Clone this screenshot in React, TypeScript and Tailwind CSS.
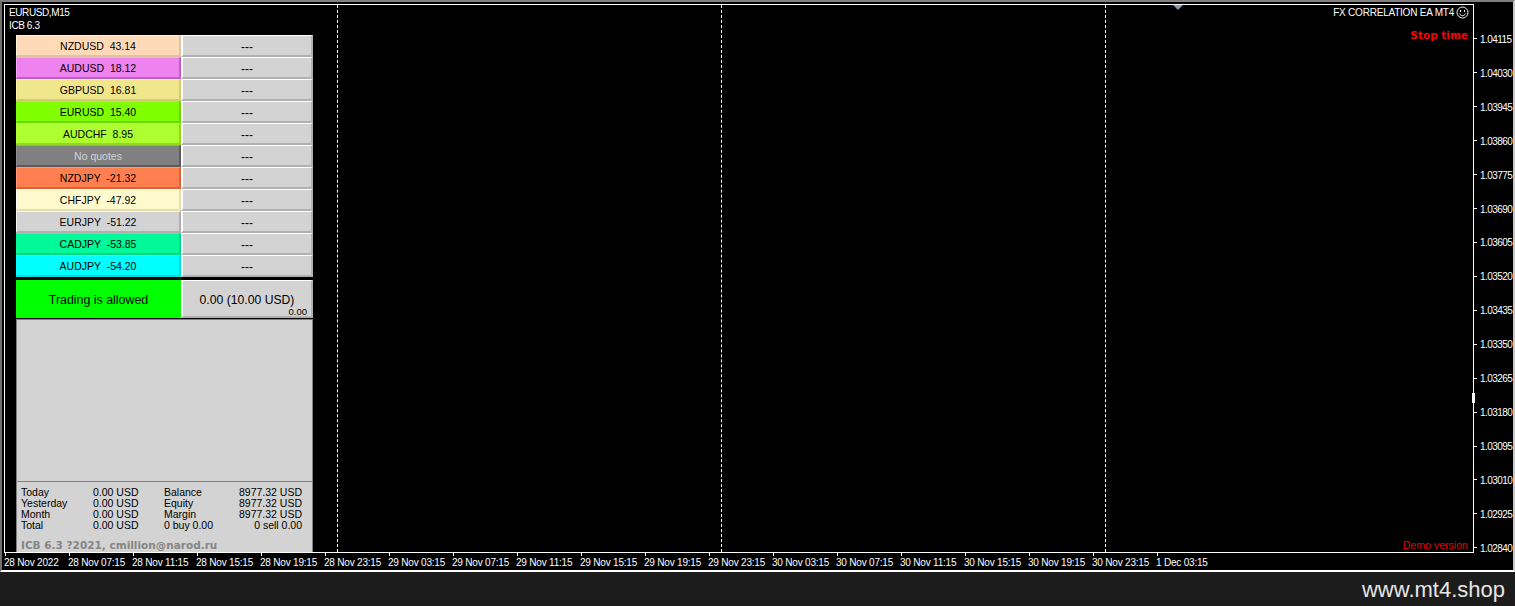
const sans = "font-['Liberation_Sans',Arial,sans-serif]";

const symbols = [
  { text: 'NZDUSD  43.14', cls: 'bg-[#ffdab9] border-t-[#fff2dc] border-l-[#fff2dc] border-r-[#e2c2a5] border-b-[#e2c2a5] text-black' },
  { text: 'AUDUSD  18.12', cls: 'bg-[#ee82ee] border-t-[#f9a8f9] border-l-[#f9a8f9] border-r-[#c55cc5] border-b-[#c55cc5] text-black' },
  { text: 'GBPUSD  16.81', cls: 'bg-[#f0e68c] border-t-[#fdf6a8] border-l-[#fdf6a8] border-r-[#d4ca78] border-b-[#d4ca78] text-black' },
  { text: 'EURUSD  15.40', cls: 'bg-[#7fff00] border-t-[#8cff1c] border-l-[#7fff00] border-r-[#68d800] border-b-[#68d800] text-black' },
  { text: 'AUDCHF  8.95', cls: 'bg-[#adff2f] border-t-[#bbff4c] border-l-[#adff2f] border-r-[#90d824] border-b-[#90d824] text-black' },
  { text: 'No quotes', cls: 'bg-[#808080] border-t-[#a0a0a0] border-l-[#909090] border-r-[#5c5c5c] border-b-[#5c5c5c] text-[#d3d3d3]' },
  { text: 'NZDJPY  -21.32', cls: 'bg-[#ff7f50] border-t-[#ff9a74] border-l-[#ff9a74] border-r-[#dc6236] border-b-[#dc6236] text-black' },
  { text: 'CHFJPY  -47.92', cls: 'bg-[#fffacd] border-t-[#ffffff] border-l-[#ffffff] border-r-[#e4deb0] border-b-[#e4deb0] text-black' },
  { text: 'EURJPY  -51.22', cls: 'bg-[#d3d3d3] border-t-[#f4f4f4] border-l-[#f4f4f4] border-r-[#b0b0b0] border-b-[#b0b0b0] text-black' },
  { text: 'CADJPY  -53.85', cls: 'bg-[#00fa9a] border-t-[#24ffb0] border-l-[#00fa9a] border-r-[#00d884] border-b-[#00d884] text-black' },
  { text: 'AUDJPY  -54.20', cls: 'bg-[#00ffff] border-t-[#30ffff] border-l-[#00ffff] border-r-[#00dcdc] border-b-[#00dcdc] text-black' },
];

const prices = ['1.04115', '1.04030', '1.03945', '1.03860', '1.03775', '1.03690', '1.03605', '1.03520', '1.03435', '1.03350', '1.03265', '1.03180', '1.03095', '1.03010', '1.02925', '1.02840'];

const times = ['28 Nov 2022', '28 Nov 07:15', '28 Nov 11:15', '28 Nov 15:15', '28 Nov 19:15', '28 Nov 23:15', '29 Nov 03:15', '29 Nov 07:15', '29 Nov 11:15', '29 Nov 15:15', '29 Nov 19:15', '29 Nov 23:15', '30 Nov 03:15', '30 Nov 07:15', '30 Nov 11:15', '30 Nov 15:15', '30 Nov 19:15', '30 Nov 23:15', '1 Dec 03:15'];

const stats = [
  ['Today', '0.00 USD', 'Balance', '8977.32 USD'],
  ['Yesterday', '0.00 USD', 'Equity', '8977.32 USD'],
  ['Month', '0.00 USD', 'Margin', '8977.32 USD'],
  ['Total', '0.00 USD', '0 buy 0.00', '0 sell 0.00'],
];

const SmileIcon = () => (
  <svg width="13" height="13" viewBox="0 0 13 13" fill="none" stroke="white" strokeWidth="1">
    <circle cx="6.5" cy="6.5" r="5.5" />
    <path d="M3.5 7.5c.7 1.5 1.8 2.2 3 2.2s2.3-.7 3-2.2" />
    <rect x="4" y="4" width="1" height="2" fill="white" stroke="none" />
    <rect x="8" y="4" width="1" height="2" fill="white" stroke="none" />
  </svg>
);

const SymbolRow = ({ text, cls }: { text: string; cls: string }) => (
  <div className="flex h-[22px]">
    <div className={`w-[165px] pt-[2px] flex items-center justify-center border-t border-l border-r-2 border-b-2 text-[10.5px] whitespace-pre ${cls}`}>
      {text}
    </div>
    <div className="w-[132px] pt-[2px] flex items-center justify-center bg-[#d3d3d3] border-t border-l-2 border-r-2 border-b-2 border-t-white border-l-white border-r-[#b0b0b0] border-b-[#b0b0b0] text-[12px] text-black">
      ---
    </div>
  </div>
);

const App = () => {
  return (
    <div className={`w-[1515px] h-[606px] flex flex-col bg-[#1c1c1c] overflow-hidden ${sans}`}>
      <div className="h-[572px] flex flex-col bg-black border-t-2 border-l-2 border-r-2 border-b-2 border-t-[#808080] border-l-[#707070] border-r-[#c8c8c8] border-b-white">
        <div className="flex h-[551px] pt-[2px] pl-[2px]">
          <div className="relative w-[1470px] h-[549px] shrink-0 border border-white flex flex-col">
            <div className="h-[30px] pl-[4px] pt-[1px] text-[10px] tracking-[-0.4px] leading-[13px] text-white">
              <div>EURUSD,M15</div>
              <div>ICB 6.3</div>
            </div>

            <div className="relative z-10 flex-1 flex flex-col w-[297px] ml-[11px]">
              {symbols.map((s) => (
                <SymbolRow key={s.text} text={s.text} cls={s.cls} />
              ))}

              <div className="mt-[3px] h-[38px] flex">
                <div className="w-[165px] pt-[2px] flex items-center justify-center bg-[#00ff00] text-[12.4px] text-black">
                  Trading is allowed
                </div>
                <div className="relative w-[132px] pt-[3px] flex items-center justify-center bg-[#d3d3d3] border-t border-l-2 border-b-2 border-r-2 border-t-white border-l-white border-r-[#b0b0b0] border-b-[#b0b0b0] text-[12.2px] text-black">
                  0.00 (10.00 USD)
                  <span className="absolute right-[4px] bottom-[-2px] text-[9.5px] leading-[12px]">0.00</span>
                </div>
              </div>

              <div className="mt-px flex-1 flex flex-col bg-[#d3d3d3] border border-b-0 border-[#808080]">
                <div className="flex-1" />
                <div className="h-[71px] border-t border-[#808080] pt-[5px] pl-[4px] flex flex-col">
                  <div className="grid grid-cols-[72px_71px_71px_67px] text-[10.5px] leading-[11px] text-black">
                    {stats.map((row) => (
                      <div key={row[0]} className="contents">
                        <div>{row[0]}</div>
                        <div>{row[1]}</div>
                        <div>{row[2]}</div>
                        <div className="text-right whitespace-nowrap">{row[3]}</div>
                      </div>
                    ))}
                  </div>
                  <div className="mt-[8px] font-['DejaVu_Sans',sans-serif] font-bold text-[10.5px] leading-[13px] text-[#858585] whitespace-nowrap">
                    ICB 6.3 ?2021, cmillion@narod.ru
                  </div>
                </div>
              </div>
            </div>

            {/* period separators and chart labels sit on the canvas */}
            <div className="absolute top-0 bottom-0 left-[332px] border-l border-dashed border-white" />
            <div className="absolute top-0 bottom-0 left-[716px] border-l border-dashed border-white" />
            <div className="absolute top-0 bottom-0 left-[1100px] border-l border-dashed border-white" />
            <div className="absolute top-0 left-[1168px] w-0 h-0 border-l-[5px] border-r-[5px] border-t-[5px] border-l-transparent border-r-transparent border-t-[#8a9aa8]" />
            <div className="absolute top-[1px] right-[4px] flex items-center gap-[1px] text-[10px] tracking-[-0.22px] leading-[13px] text-white">
              <span className="mr-[1px]">FX CORRELATION EA MT4</span>
              <SmileIcon />
            </div>
            <div className="absolute top-[24px] right-[5px] font-['DejaVu_Sans',sans-serif] font-bold text-[10.5px] leading-[13px] text-[#ff0000]">
              Stop time
            </div>
            <div className="absolute bottom-[0px] right-[5px] text-[10.6px] leading-[13px] text-[#e60000]">
              Demo version
            </div>
            <div className="absolute top-[388px] right-[-2px] w-[3px] h-[10px] bg-white" />
          </div>

          <div className="flex-1 h-[549px] pt-[18px] overflow-hidden">
            {prices.map((p) => (
              <div key={p} className="h-[33.93px] flex items-center text-[10px] tracking-[-0.55px] text-white">
                <span className="w-[3px] h-px shrink-0 bg-white mr-[3px]" />
                <span className="mt-[1px]">{p}</span>
              </div>
            ))}
          </div>
        </div>

        <div className="flex-1 flex pl-[2px]">
          {times.map((t) => (
            <div key={t} className="w-[64px] shrink-0 relative pt-[4px] text-[10px] tracking-[-0.2px] leading-[12px] text-white whitespace-nowrap">
              <span className="absolute top-0 left-px w-px h-[3px] bg-white" />
              {t}
            </div>
          ))}
        </div>
      </div>

      <div className="flex-1 flex items-center justify-end pr-[10px] text-[22px] text-[#e6e6e6]">www.mt4.shop</div>
    </div>
  );
};

export default App;
